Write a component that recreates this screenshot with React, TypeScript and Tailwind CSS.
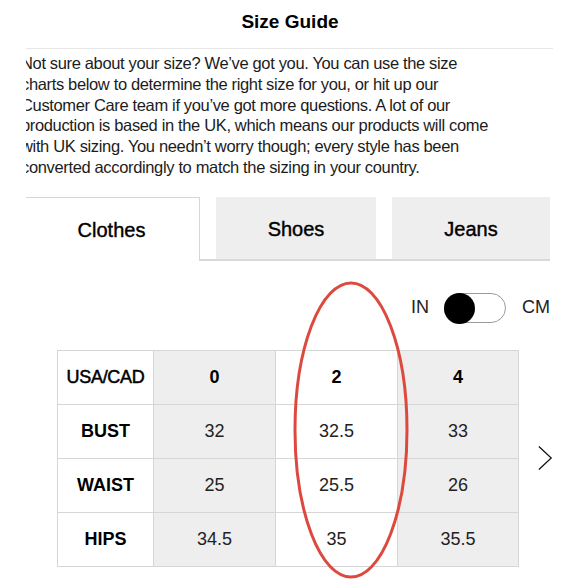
import React from "react";

const rows = [
  { label: "BUST", v: ["32", "32.5", "33"] },
  { label: "WAIST", v: ["25", "25.5", "26"] },
  { label: "HIPS", v: ["34.5", "35", "35.5"] },
];

const colBg = ["bg-white", "bg-[#eeeeee]", "bg-white", "bg-[#eeeeee]"];

export default function App() {
  return (
    <div className="relative w-[580px] h-[580px] overflow-hidden bg-white font-['Liberation_Sans',Arial,sans-serif] text-[#111]">
      <div className="pt-[8px] pb-[12px] leading-[28px] text-center text-[19px] font-bold text-black">
        Size Guide
      </div>
      <div className="ml-[26px] w-[527px] overflow-hidden">
        <div className="border-t border-[#e6e6e6]" />
        <p className="-ml-[5px] w-[540px] pt-[4px] text-[16.5px] leading-[20.8px] tracking-[-0.35px] text-[#1c1c1c]">
          Not sure about your size? We’ve got you. You can use the size
          <br />
          charts below to determine the right size for you, or hit up our
          <br />
          Customer Care team if you’ve got more questions. A lot of our
          <br />
          production is based in the UK, which means our products will come
          <br />
          with UK sizing. You needn’t worry though; every style has been
          <br />
          converted accordingly to match the sizing in your country.
        </p>

        <div className="mt-[19px] flex items-end">
          <div className="w-[174px] h-[64px] border-t border-r border-[#d6d6d6] flex items-center justify-center text-[20px] text-black [-webkit-text-stroke:0.4px_black]">
            <span className="ml-[-2px] pt-[2px]">Clothes</span>
          </div>
          <div className="w-[350px] h-[64px] border-b-2 border-[#d9d9d9] pl-[16px] flex items-end gap-[16px]">
            <div className="w-[160px] h-[62px] bg-[#eeeeee] flex items-center justify-center text-[20px] text-black [-webkit-text-stroke:0.4px_black]">
              <span className="pt-[2px]">Shoes</span>
            </div>
            <div className="w-[158px] h-[62px] bg-[#eeeeee] flex items-center justify-center text-[20px] text-black [-webkit-text-stroke:0.4px_black]">
              <span className="pt-[2px]">Jeans</span>
            </div>
          </div>
        </div>

        <div className="mt-[32px] h-[30px] flex items-center justify-end pr-[3px] text-[18px] text-[#222]">
          <span>IN</span>
          <div className="ml-[15px] relative w-[62px] h-[30px] rounded-full border border-[#9a9a9a] bg-white">
            <div className="absolute left-[-1px] top-[-1px] w-[31px] h-[31px] rounded-full bg-black" />
          </div>
          <span className="ml-[16px]">CM</span>
        </div>

        <div className="mt-[27px] ml-[31px] flex items-center">
          <table className="border-collapse table-fixed w-[461px] text-[18px]">
            <colgroup>
              <col className="w-[96px]" />
              <col className="w-[122px]" />
              <col className="w-[122px]" />
              <col className="w-[121px]" />
            </colgroup>
            <tbody>
              <tr>
                <td className="h-[54px] border-[1.5px] border-[#d6d6d6] bg-white text-center text-black tracking-[-0.3px] [-webkit-text-stroke:0.5px_black]">
                  USA/CAD
                </td>
                {["0", "2", "4"].map((s, i) => (
                  <td
                    key={s}
                    className={`h-[54px] border-[1.5px] border-[#d6d6d6] text-center font-bold text-black ${colBg[i + 1]}`}
                  >
                    {s}
                  </td>
                ))}
              </tr>
              {rows.map((r) => (
                <tr key={r.label}>
                  <td className="h-[54px] border-[1.5px] border-[#d6d6d6] bg-white text-center font-bold text-black">
                    {r.label}
                  </td>
                  {r.v.map((v, i) => (
                    <td
                      key={i}
                      className={`h-[54px] border-[1.5px] border-[#d6d6d6] text-center text-[#222] ${colBg[i + 1]}`}
                    >
                      {v}
                    </td>
                  ))}
                </tr>
              ))}
            </tbody>
          </table>
          <svg className="ml-[19px]" width="17" height="28" viewBox="0 0 17 28" fill="none">
            <polyline points="1,1 15,14 1,27" stroke="#111" strokeWidth="1.4" />
          </svg>
        </div>
      </div>

      <svg className="pointer-events-none absolute left-0 top-0" width="580" height="580">
        <ellipse cx="351" cy="430" rx="56" ry="147" fill="none" stroke="#dc4a3f" strokeWidth="3" />
      </svg>
    </div>
  );
}
